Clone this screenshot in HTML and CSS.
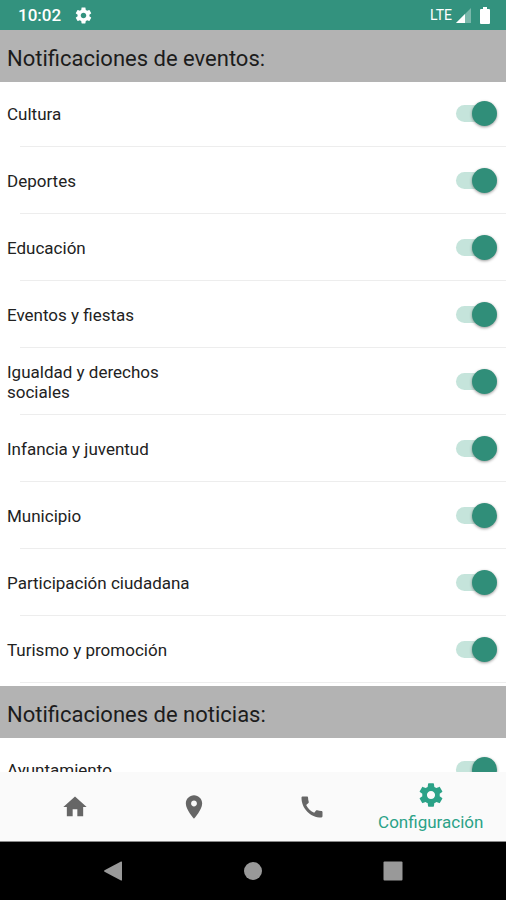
FILE: index.html
```html
<!DOCTYPE html>
<html lang="es">
<head>
<meta charset="utf-8">
<meta name="viewport" content="width=device-width, initial-scale=1">
<title>Configuración</title>
<link rel="stylesheet" href="styles.css">
</head>
<body>
<svg class="defs" aria-hidden="true">
  <symbol id="gear" viewBox="0 0 24 24"><path d="M19.43 12.98c.04-.32.07-.64.07-.98s-.03-.66-.07-.98l2.11-1.65c.19-.15.24-.42.12-.64l-2-3.46c-.12-.22-.39-.3-.61-.22l-2.49 1c-.52-.4-1.08-.73-1.69-.98l-.38-2.65C14.46 2.18 14.25 2 14 2h-4c-.25 0-.46.18-.49.42l-.38 2.65c-.61.25-1.17.59-1.69.98l-2.49-1c-.23-.09-.49 0-.61.22l-2 3.46c-.13.22-.07.49.12.64l2.11 1.65c-.04.32-.07.65-.07.98s.03.66.07.98l-2.11 1.65c-.19.15-.24.42-.12.64l2 3.46c.12.22.39.3.61.22l2.49-1c.52.4 1.08.73 1.69.98l.38 2.65c.03.24.24.42.49.42h4c.25 0 .46-.18.49-.42l.38-2.65c.61-.25 1.17-.59 1.69-.98l2.49 1c.23.09.49 0 .61-.22l2-3.46c.12-.22.07-.49-.12-.64l-2.11-1.65zM12 15.5c-1.930 0-3.500-1.570-3.500-3.500s1.570-3.500 3.500-3.500 3.500 1.570 3.500 3.500-1.570 3.500-3.500 3.500z"/></symbol>
</svg>
<div class="screen">
  <header class="status">
    <span class="clock">10:02</span>
    <svg class="status-gear"><use href="#gear"/></svg>
    <span class="network">LTE</span>
    <svg class="signal" viewBox="0 0 15 15"><path d="M15 0V15H0z" opacity=".35"/><path d="M9 6V15H0z"/></svg>
    <svg class="battery" viewBox="0 0 10 17"><path d="M3 0h4v2h2a1 1 0 0 1 1 1v13a1 1 0 0 1-1 1H1a1 1 0 0 1-1-1V3a1 1 0 0 1 1-1h2z"/></svg>
  </header>
  <main class="content">
    <h2 class="heading">Notificaciones de eventos:</h2>
    <ul class="list">
      <li class="row"><label for="e1">Cultura</label><input class="switch" type="checkbox" role="switch" id="e1" checked></li>
      <li class="row"><label for="e2">Deportes</label><input class="switch" type="checkbox" role="switch" id="e2" checked></li>
      <li class="row"><label for="e3">Educación</label><input class="switch" type="checkbox" role="switch" id="e3" checked></li>
      <li class="row"><label for="e4">Eventos y fiestas</label><input class="switch" type="checkbox" role="switch" id="e4" checked></li>
      <li class="row"><label for="e5">Igualdad y derechos sociales</label><input class="switch" type="checkbox" role="switch" id="e5" checked></li>
      <li class="row"><label for="e6">Infancia y juventud</label><input class="switch" type="checkbox" role="switch" id="e6" checked></li>
      <li class="row"><label for="e7">Municipio</label><input class="switch" type="checkbox" role="switch" id="e7" checked></li>
      <li class="row"><label for="e8">Participación ciudadana</label><input class="switch" type="checkbox" role="switch" id="e8" checked></li>
      <li class="row"><label for="e9">Turismo y promoción</label><input class="switch" type="checkbox" role="switch" id="e9" checked></li>
    </ul>
    <h2 class="heading">Notificaciones de noticias:</h2>
    <ul class="list">
      <li class="row"><label for="n1">Ayuntamiento</label><input class="switch" type="checkbox" role="switch" id="n1" checked></li>
    </ul>
  </main>
  <nav class="tabs">
    <a class="tab" href="#inicio" aria-label="Inicio"><svg class="tab-icon" viewBox="0 0 24 24"><path d="M10 20v-6h4v6h5v-8h3L12 3 2 12h3v8z"/></svg></a>
    <a class="tab" href="#mapa" aria-label="Mapa"><svg class="tab-icon" viewBox="0 0 24 24"><path d="M12 2C8.13 2 5 5.130 5 9c0 5.250 7 13 7 13s7-7.750 7-13c0-3.870-3.130-7-7-7zm0 9.500c-1.380 0-2.500-1.120-2.500-2.500s1.120-2.500 2.500-2.500 2.500 1.120 2.500 2.500-1.120 2.500-2.500 2.500z"/></svg></a>
    <a class="tab" href="#telefono" aria-label="Teléfono"><svg class="tab-icon" viewBox="0 0 24 24"><path d="M20.010 15.380c-1.230 0-2.420-.2-3.530-.56-.35-.12-.74-.03-1.010.24l-1.570 1.970c-2.830-1.350-5.480-3.900-6.890-6.830l1.950-1.660c.27-.28.35-.67.24-1.020-.37-1.110-.56-2.300-.56-3.530 0-.54-.45-.99-.99-.99H4.190C3.650 3 3 3.240 3 3.990 3 13.280 10.730 21 20.010 21c.71 0 .99-.63.99-1.180v-3.450c0-.54-.45-.99-.99-.99z"/></svg></a>
    <a class="tab active" href="#configuracion" aria-current="page"><svg class="tab-icon"><use href="#gear"/></svg><span>Configuración</span></a>
  </nav>
  <footer class="system">
    <button type="button" aria-label="Atrás"><svg viewBox="0 0 20 20"><path d="M1.500 9.300 18 .5q1-.4 1 .6v17.800q0 1-1 .6L1.500 10.700q-1-.7 0-1.400z"/></svg></button>
    <button type="button" aria-label="Inicio del sistema"><svg viewBox="0 0 20 20"><circle cx="10" cy="10" r="9"/></svg></button>
    <button type="button" aria-label="Recientes"><svg viewBox="0 0 20 20"><rect x=".5" y=".5" width="19" height="19" rx="1"/></svg></button>
  </footer>
</div>
</body>
</html>
```
FILE: styles.css
```css
* { box-sizing: border-box; }

body {
  margin: 0;
  background: #fff;
  color: #222;
  font-family: Roboto, "Liberation Sans", sans-serif;
  font-size: 17px;
  line-height: 20px;
}

.defs {
  position: absolute;
  width: 0;
  height: 0;
}

svg { display: block; fill: currentColor; }

.screen {
  display: flex;
  flex-direction: column;
  height: 100vh;
}

.status {
  display: flex;
  flex: none;
  align-items: center;
  height: 30px;
  padding: 0 16px 0 18px;
  background: #33927e;
  color: #fff;
}

.clock { font-size: 17px; font-weight: 500; }

.status-gear {
  width: 19px;
  height: 19px;
  margin-left: 13px;
}

.network {
  margin-left: auto;
  font-size: 14px;
}

.signal {
  width: 15px;
  height: 15px;
  margin-left: 4px;
}

.battery {
  width: 10px;
  height: 17px;
  margin-left: 9px;
}

.content {
  flex: 1;
  min-height: 0;
  overflow: hidden;
}

.heading {
  display: flex;
  align-items: center;
  height: 52px;
  margin: 0;
  padding: 5px 7px 0;
  background: #b3b3b3;
  color: #1c1c1c;
  font-size: 22px;
  font-weight: 400;
  line-height: 28px;
}

.list {
  margin: 0;
  padding: 0 0 3px;
  list-style: none;
}

.row {
  display: flex;
  align-items: center;
  justify-content: space-between;
  min-height: 67px;
  padding: 0 9px 0 7px;
  background: linear-gradient(#ededed, #ededed) 20px 100% / 100% 1px no-repeat;
}

.row:first-child {
  min-height: 65px;
  padding-bottom: 2px;
}

.row label { max-width: 200px; }

.switch {
  position: relative;
  width: 41px;
  height: 25px;
  margin: 0;
  appearance: none;
}

.switch::before {
  content: "";
  position: absolute;
  inset: 4px 4px 4px 0;
  border-radius: 9px;
  background: #c5e4db;
}

.switch::after {
  content: "";
  position: absolute;
  top: 0;
  left: 0;
  width: 25px;
  height: 25px;
  border-radius: 50%;
  background: #f5f5f5;
  box-shadow: 0 1px 3px rgba(0, 0, 0, 0.4);
}

.switch:checked::after {
  left: 16px;
  background: #308e79;
}

.tabs {
  display: flex;
  flex: none;
  height: 70px;
  padding: 0 16px;
  border-bottom: 1px solid #8a8a8a;
  background: #fafafa;
}

.tab {
  display: flex;
  flex: 1;
  flex-direction: column;
  align-items: center;
  justify-content: center;
  color: #666;
  text-decoration: none;
}

.tab-icon { width: 28px; height: 28px; }

.active {
  gap: 3px;
  color: #2ba287;
}

.system {
  display: flex;
  flex: none;
  align-items: center;
  justify-content: center;
  gap: 120px;
  height: 58px;
  background: #000;
}

.system button {
  padding: 0;
  border: 0;
  background: none;
  color: #999;
}

.system svg { width: 20px; height: 20px; }
```
